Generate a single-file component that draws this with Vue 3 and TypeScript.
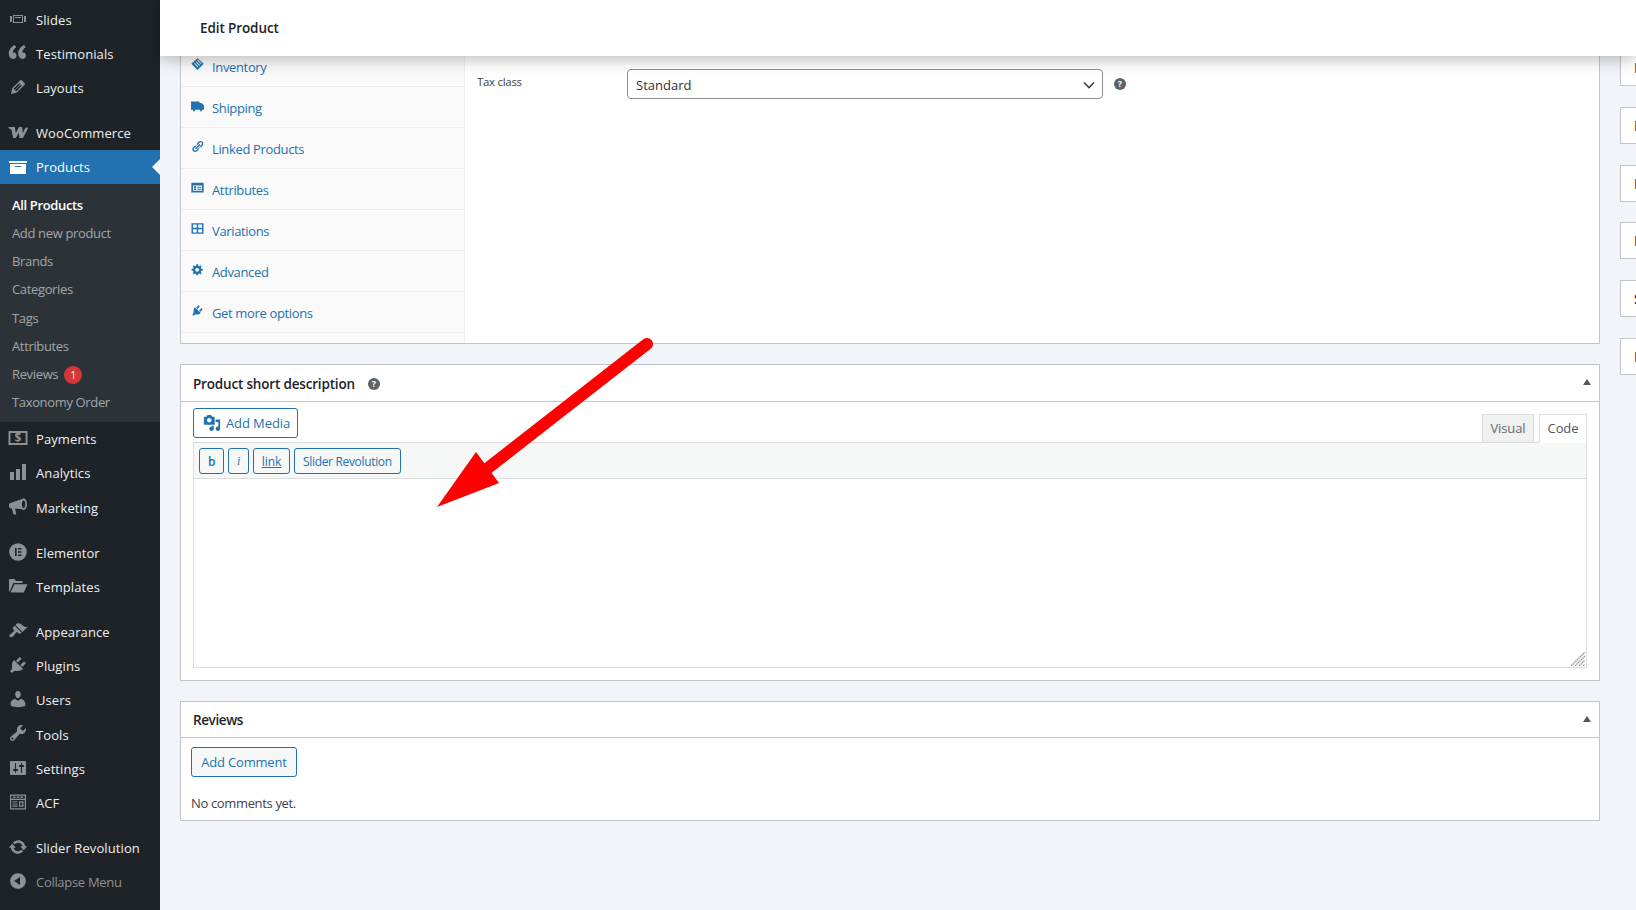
<script setup lang="ts">
interface MenuItem { label: string; d: string; gap?: boolean; glyph?: string }

const slides = 'M5 14V6h10v8H5zm-3-1V7h2v6H2zm4-6v6h8V7H6zm10 0h2v6h-2V7zm-3 2V8H7v1h6z'
const quote = 'M8.54 12.74c0-.87-.24-1.61-.72-2.22-.73-.92-2.14-1.03-2.96-.85-.34-1.93 1.3-4.39 3.42-5.45L6.65 1.94C3.45 3.46.31 6.96.85 11.37 1.19 14.16 2.8 16 5.08 16c1 0 1.83-.29 2.48-.88.66-.59.98-1.38.98-2.38zm9.43 0c0-.87-.24-1.61-.72-2.22-.73-.92-2.14-1.03-2.96-.85-.34-1.93 1.3-4.39 3.42-5.45l-1.63-2.28c-3.2 1.52-6.34 5.02-5.8 9.43.34 2.79 1.95 4.63 4.23 4.63 1 0 1.83-.29 2.48-.88.66-.59.98-1.38.98-2.38z'
const edit = 'M13.89 3.39l2.71 2.72c.46.46.42 1.24.03 1.64l-8.01 8.02-5.56 1.16 1.16-5.58s7.6-7.63 7.99-8.03c.39-.39 1.22-.39 1.68.07zm-2.73 2.79l-5.59 5.61 1.11 1.11 5.54-5.65zm-2.97 8.23l5.58-5.6-1.07-1.08-5.59 5.6z'
const woo = 'M.2 5h6.6l1 6L11 5h3l1 6 2-4.4c.5-1.2 2.8-1.8 2.8-.3 0 1.2-3.5 7.2-4.8 9.7h-3.4l-.9-5-3 5H5.2L3.5 8 1.3 6.6z'
const archive = 'M19 4v2H1V4h18zM2 7h16v10H2V7zm11 3V9H7v1h6z'
const payments = 'M.5 3h19v14H.5zM2.4 5v10h15.2V5z'
const bars = 'M18 18V2h-4v16h4zm-6 0V7H8v11h4zm-6 0v-8H2v8h4z'
const megaphone = 'M15.6 1.5c2 0 3.4 2.6 3.4 5.7s-1.4 5.7-3.4 5.7c-.5 0-1-.2-1.4-.6L7 11.4l1.3 6.1H5.5l-1.6-6.1H3.2C2 11.4 1 10.5 1 9.3V8c0-1.2.9-2.1 2.1-2.2l11-3.7c.4-.4 1-.6 1.5-.6zM15.6 3.5c-1 0-1.7 1.7-1.7 3.7s.7 3.7 1.7 3.7 1.7-1.7 1.7-3.7-.7-3.7-1.7-3.7z'
const elementor = 'M10 1.2a8.8 8.8 0 1 0 0 17.6a8.8 8.8 0 0 0 0-17.6zM7 6h1.6v8H7zM10 6h3.5v1.6H10zM10 9.2h3.5v1.6H10zM10 12.4h3.5V14H10z'
const folder = 'M1 3h5.5L8 5h6.5v2H5.5L1.5 15.5H1zM6.4 8.2H19.5L15.8 16.5H2.5z'
const brush = 'M14.48 11.06L7.41 3.99l1.5-1.5c.5-.56 2.3-.47 3.51.32 1.21.8 1.43 1.28 2.91 2.1 1.18.64 2.45 1.26 4.45.85zm-.71.71L6.7 4.7 4.93 6.47c-.39.39-.39 1.02 0 1.41l1.06 1.06c.39.39.39 1.03 0 1.42-.6.6-1.43 1.11-2.21 1.69-.35.26-.7.53-1.01.84C1.43 13.23.91 14.8 1.8 15.7c.9.89 2.47.37 3.83-.98.32-.32.59-.66.85-1.01.58-.78 1.09-1.61 1.69-2.21.39-.39 1.03-.39 1.42 0l1.06 1.06c.39.39 1.02.39 1.41 0z'
const plug = 'M13.11 4.36L9.87 7.6 8 5.73l3.24-3.24c.35-.34 1.05-.2 1.56.32.52.51.66 1.21.31 1.55zm-8 1.77l.91-1.12 9.01 9.01-1.19.84c-.71.71-2.63 1.16-3.82 1.16H6.14L4.9 17.26c-.59.59-1.54.59-2.12 0-.59-.58-.59-1.53 0-2.12l1.24-1.24v-3.88c0-1.13.4-3.19 1.09-3.89zm7.26 3.97l3.24-3.24c.34-.35 1.04-.21 1.55.31.52.51.66 1.21.31 1.55l-3.24 3.25z'
const user = 'M10 9.25c-2.27 0-2.73-3.44-2.73-3.44C7 4.02 7.82 2 9.97 2c2.16 0 2.98 2.02 2.71 3.81 0 0-.41 3.44-2.68 3.44zm0 2.57L12.72 10c2.39 0 4.52 2.33 4.52 4.53v2.49s-3.65 1.13-7.24 1.13c-3.65 0-7.24-1.13-7.24-1.13v-2.49c0-2.25 1.94-4.48 4.47-4.48z'
const wrench = 'M16.68 9.77c-1.34 1.34-3.3 1.67-4.95.99l-5.41 6.52c-.99.99-2.59.99-3.58 0s-.99-2.59 0-3.57l6.52-5.42c-.68-1.65-.35-3.61.99-4.95 1.28-1.28 3.12-1.62 4.72-1.06l-2.89 2.89 2.82 2.82 2.86-2.87c.53 1.58.18 3.39-1.08 4.65zM3.81 16.21c.4.39 1.04.39 1.43 0 .4-.4.4-1.04 0-1.43-.39-.4-1.03-.4-1.43 0-.39.39-.39 1.03 0 1.43z'
const sliders = 'M18 16V4c0-.55-.45-1-1-1H3c-.55 0-1 .45-1 1v12c0 .55.45 1 1 1h14c.55 0 1-.45 1-1zM8 11h1c.55 0 1 .45 1 1s-.45 1-1 1H8v1.5c0 .28-.22.5-.5.5s-.5-.22-.5-.5V13H6c-.55 0-1-.45-1-1s.45-1 1-1h1V5.5c0-.28.22-.5.5-.5s.5.22.5.5V11zm5-2h-1c-.55 0-1-.45-1-1s.45-1 1-1h1V5.5c0-.28.22-.5.5-.5s.5.22.5.5V7h1c.55 0 1 .45 1 1s-.45 1-1 1h-1v5.5c0 .28-.22.5-.5.5s-.5-.22-.5-.5V9z'
const acf = 'M2 2.5h16v15H2zM3.2 3.7v3h13.6v-3zM5 4.5h2.5V6H5zM8.8 4.5h2.5V6H8.8zM12.5 4.5H15V6h-2.5zM3.2 7.9v8.4h13.6V7.9zM4.5 9.2h5v1.1h-5zM4.5 11.4h5v1.1h-5zM4.5 13.6h5v1.1h-5zM11 9.2h4.5v5.5H11zM12.2 10.4v3.1h2.1v-3.1z'
const update = 'M10.2 3.28c3.53 0 6.43 2.61 6.92 6h2.08l-3.5 4-3.5-4h2.32c-.45-1.97-2.21-3.45-4.32-3.45-1.45 0-2.73.71-3.54 1.78L4.95 5.66C6.23 4.2 8.11 3.28 10.2 3.28zm-.4 13.44c-3.52 0-6.43-2.61-6.92-6H.8l3.5-4c1.17 1.33 2.33 2.67 3.5 4H5.48c.45 1.97 2.21 3.45 4.32 3.45 1.45 0 2.73-.71 3.54-1.78l1.71 1.95c-1.28 1.46-3.15 2.38-5.25 2.38z'
const collapse = 'M10 2.16c4.33 0 7.84 3.51 7.84 7.84s-3.51 7.84-7.84 7.84S2.16 14.33 2.16 10 5.71 2.16 10 2.16zm2 11.72V6.12L6.18 9.97z'
const media = 'M13 11V4c0-.55-.45-1-1-1h-1.67L9 1H5L3.67 3H2c-.55 0-1 .45-1 1v7c0 .55.45 1 1 1h10c.55 0 1-.45 1-1zM7 4.5c1.38 0 2.5 1.12 2.5 2.5S8.38 9.5 7 9.5 4.5 8.38 4.5 7 5.62 4.5 7 4.5zM14 6h5v10.5c0 1.38-1.12 2.5-2.5 2.5S14 17.88 14 16.5s1.12-2.5 2.5-2.5c.17 0 .34.02.5.05V9h-3V6zm-4 8.05V13h2v3.5c0 1.38-1.12 2.5-2.5 2.5S7 17.88 7 16.5 8.12 14 9.5 14c.17 0 .34.02.5.05z'

const tagIcon = 'M10 .5L19.5 9 10 18.5.5 9zM10.6 2.8l-1 1L15.2 9.4l1-1zM8.2 5.2l-1 1L12.8 11.8l1-1zM5.8 7.6l-1 1L10.4 14.2l1-1z'
const truck = 'M0 4h13v2h3.5L20 10v6.5H0zM3 16.5h3V19H3zM14 16.5h3V19h-3z'
const link = 'M17.74 2.76c1.68 1.69 1.68 4.41 0 6.1l-1.53 1.52c-1.12 1.12-2.7 1.47-4.14 1.09l2.62-2.61.76-.77.76-.76c.84-.84.84-2.2 0-3.04-.84-.85-2.2-.85-3.04 0l-.77.76-3.38 3.38c-.37-1.44-.02-3.02 1.1-4.14l1.52-1.53c1.69-1.68 4.42-1.68 6.1 0zM8.59 13.43l5.34-5.34c.42-.42.42-1.1 0-1.52-.44-.43-1.13-.39-1.53 0l-5.33 5.34c-.42.42-.42 1.1 0 1.52.44.43 1.13.39 1.52 0zm-.76 2.29l4.14-4.15c.38 1.44.03 3.02-1.09 4.14l-1.52 1.53c-1.69 1.68-4.41 1.68-6.1 0-1.68-1.68-1.68-4.42 0-6.1l1.53-1.52c1.12-1.12 2.7-1.47 4.14-1.1l-4.14 4.15c-.85.84-.85 2.2 0 3.05.84.84 2.2.84 3.04 0z'
const card = 'M.5 2.5h19v15H.5zM3 7v8h14V7zM4.5 8.2h3.2v2.4H4.5zM4.5 11.6h3.2v2.2H4.5zM9.5 8.8h6.3v1.4H9.5zM9.5 12h6.3v1.4H9.5z'
const grid = 'M.8 2h18.4v16H.8zM3 4v4.9h5.9V4zM11.1 4v4.9H17V4zM3 11.1V16h5.9v-4.9zM11.1 11.1V16H17v-4.9z'
const gear = 'M18 12h-2.18c-.17.7-.44 1.35-.81 1.93l1.54 1.54-2.1 2.1-1.54-1.54c-.58.36-1.23.63-1.91.79V19H8v-2.18c-.68-.16-1.33-.43-1.91-.79l-1.54 1.54-2.12-2.12 1.54-1.54c-.36-.58-.63-1.23-.79-1.91H1V9.03h2.17c.16-.7.44-1.35.8-1.94L2.43 5.55l2.1-2.1 1.54 1.54c.58-.37 1.24-.64 1.93-.81V2h3v2.18c.68.16 1.33.43 1.91.79l1.54-1.54 2.12 2.12-1.54 1.54c.36.59.64 1.24.8 1.94H18V12zm-8.5 1.5c1.66 0 3-1.34 3-3s-1.34-3-3-3-3 1.34-3 3 1.34 3 3 3z'

const topMenu: MenuItem[] = [
  { label: 'Slides', d: slides },
  { label: 'Testimonials', d: quote },
  { label: 'Layouts', d: edit },
  { label: 'WooCommerce', d: woo, gap: true },
]
const subMenu = ['Add new product', 'Brands', 'Categories', 'Tags', 'Attributes']
const bottomMenu: MenuItem[] = [
  { label: 'Payments', d: payments, glyph: '$' },
  { label: 'Analytics', d: bars },
  { label: 'Marketing', d: megaphone },
  { label: 'Elementor', d: elementor, gap: true },
  { label: 'Templates', d: folder },
  { label: 'Appearance', d: brush, gap: true },
  { label: 'Plugins', d: plug },
  { label: 'Users', d: user },
  { label: 'Tools', d: wrench },
  { label: 'Settings', d: sliders },
  { label: 'ACF', d: acf },
  { label: 'Slider Revolution', d: update, gap: true },
]
const tabs = [
  { label: 'Inventory', d: tagIcon },
  { label: 'Shipping', d: truck },
  { label: 'Linked Products', d: link },
  { label: 'Attributes', d: card },
  { label: 'Variations', d: grid },
  { label: 'Advanced', d: gear },
  { label: 'Get more options', d: plug },
]
const sideBoxes = ['P', 'P', 'P', 'P', 'S', 'P']
</script>

<template>
  <div class="page">
    <aside class="sidebar">
      <ul class="menu top">
        <li v-for="m in topMenu" :key="m.label" class="item" :class="{ gap: m.gap }">
          <svg class="ico" viewBox="0 0 20 20"><path :d="m.d" fill-rule="evenodd" /></svg>
          <span>{{ m.label }}</span>
        </li>
        <li class="item current">
          <svg class="ico" viewBox="0 0 20 20"><path :d="archive" fill-rule="evenodd" /></svg>
          <span>Products</span>
          <i class="notch"></i>
        </li>
      </ul>
      <ul class="sub">
        <li class="strong">All Products</li>
        <li v-for="s in subMenu" :key="s">{{ s }}</li>
        <li>Reviews <b class="badge">1</b></li>
        <li>Taxonomy Order</li>
      </ul>
      <ul class="menu">
        <li v-for="m in bottomMenu" :key="m.label" class="item" :class="{ gap: m.gap }">
          <svg class="ico" viewBox="0 0 20 20">
            <path :d="m.d" fill-rule="evenodd" />
            <text v-if="m.glyph" x="10" y="14" text-anchor="middle" class="glyph">{{ m.glyph }}</text>
          </svg>
          <span>{{ m.label }}</span>
        </li>
        <li class="item dim">
          <svg class="ico" viewBox="0 0 20 20"><path :d="collapse" fill-rule="evenodd" /></svg>
          <span>Collapse Menu</span>
        </li>
      </ul>
    </aside>

    <main class="main">
      <header class="topbar">Edit Product</header>

      <div class="columns">
        <div class="left">
          <section class="panel data">
            <ul class="tabs">
              <li v-for="t in tabs" :key="t.label">
                <svg viewBox="0 0 20 20"><path :d="t.d" fill-rule="evenodd" /></svg>
                <span>{{ t.label }}</span>
              </li>
            </ul>
            <div class="tax">
              <label>Tax class</label>
              <div class="select">
                <span>Standard</span>
                <svg viewBox="0 0 12 8"><path d="M1 1.5l5 5 5-5" fill="none" stroke="#3c434a" stroke-width="1.6" /></svg>
              </div>
              <i class="help">?</i>
            </div>
          </section>

          <section class="panel">
            <h2 class="phead">
              <span>Product short description</span><i class="help">?</i>
              <i class="toggle"></i>
            </h2>
            <div class="pbody">
              <div class="toprow">
                <button class="btn media">
                  <svg viewBox="0 0 20 20"><path :d="media" fill-rule="evenodd" /></svg>Add Media
                </button>
                <div class="modes">
                  <span class="mode visual">Visual</span>
                  <span class="mode on">Code</span>
                </div>
              </div>
              <div class="qt">
                <button class="qb b">b</button>
                <button class="qb i">i</button>
                <button class="qb l">link</button>
                <button class="qb">Slider Revolution</button>
              </div>
              <div class="editor">
                <svg class="grip" viewBox="0 0 14 14">
                  <path d="M0 14L14 0M4 14L14 4M8 14l6-6M12 14l2-2" stroke="#8c8f94" stroke-width="1.3" stroke-dasharray="1.5 .6" fill="none" />
                </svg>
              </div>
            </div>
          </section>

          <section class="panel">
            <h2 class="phead small"><span>Reviews</span><i class="toggle"></i></h2>
            <div class="rbody">
              <button class="btn comment">Add Comment</button>
              <p>No comments yet.</p>
            </div>
          </section>
        </div>

        <div class="right">
          <div v-for="(b, i) in sideBoxes" :key="i" class="box">{{ b }}</div>
        </div>
      </div>

      <svg class="arrow" viewBox="0 0 700 560" width="700" height="560" aria-hidden="true">
        <line x1="647" y1="344" x2="488" y2="468" stroke="#ff0000" stroke-width="12" stroke-linecap="round" />
        <polygon points="437,507 476,452 499,483" fill="#ff0000" />
      </svg>
    </main>
  </div>
</template>

<style>
html, body { margin: 0; background: #f1f4f8; overflow: hidden; }
</style>

<style scoped>
.page {
  display: flex;
  width: 1636px;
  height: 910px;
  overflow: hidden;
  font-family: "Open Sans", "Noto Sans", sans-serif;
  font-size: 13px;
  background: #f1f4f8;
  color: #3c434a;
}
ul { list-style: none; margin: 0; padding: 0; }

.sidebar { width: 160px; flex: none; background: #1d2327; color: #f0f0f1; }
.menu.top { padding-top: 2.5px; }
.item {
  position: relative;
  display: flex;
  align-items: center;
  height: 34.2px;
  padding-left: 36px;
  white-space: nowrap;
  letter-spacing: 0.1px;
}
.item.gap { margin-top: 10.9px; }
.ico {
  position: absolute;
  left: 8px;
  top: 6px;
  width: 20px;
  height: 20px;
  fill: #8e9194;
}
.glyph { font: 700 12px "Open Sans", sans-serif; fill: #8e9194; }
.item.current { background: #2271b1; color: #fff; height: 34px; letter-spacing: 0; }
.item.current .ico { fill: #fff; top: 7px; }
.notch {
  position: absolute;
  right: 0;
  top: 9px;
  border: 8px solid transparent;
  border-left-width: 0;
  border-right-color: #f1f4f8;
}
.item.dim { color: #8e9194; letter-spacing: -0.3px; }

.sub { background: #2c3338; padding: 7px 0 6.3px; color: #a2a6aa; }
.sub li { height: 28.1px; line-height: 28px; padding-left: 12px; white-space: nowrap; letter-spacing: -0.35px; }
.sub .strong { color: #fff; font-weight: 600; }
.badge {
  display: inline-block;
  width: 18px;
  height: 18px;
  line-height: 18px;
  margin-left: 3px;
  border-radius: 50%;
  background: #d63638;
  color: #fff;
  font-size: 10px;
  font-weight: 400;
  text-align: center;
  letter-spacing: 0;
}

.main { position: relative; flex: 1; min-width: 0; padding-left: 20px; }
.topbar {
  position: absolute;
  top: 0;
  left: 0;
  right: 0;
  z-index: 2;
  height: 56px;
  box-sizing: border-box;
  padding: 18px 0 0 40px;
  background: #fff;
  box-shadow: 0 2px 18px rgba(0, 0, 0, 0.3);
  color: #1d2327;
  font-size: 13.5px;
  font-weight: 600;
  line-height: 20px;
  letter-spacing: -0.1px;
}
.columns { display: flex; gap: 20px; }
.left { width: 1420px; flex: none; padding-top: 45px; }
.right { padding-top: 49px; width: 280px; flex: none; }
.box {
  box-sizing: border-box;
  display: flex;
  align-items: center;
  height: 37px;
  margin-bottom: 20.8px;
  padding-left: 13px;
  background: #fff;
  border: 1px solid #c3c4c7;
  font-weight: 600;
  color: #1d2327;
  font-size: 14px;
}

.panel { background: #fff; border: 1px solid #c3c4c7; margin-bottom: 20px; box-sizing: border-box; }
.panel.data { display: flex; height: 299px; }
.tabs { width: 283px; flex: none; background: #fafafa; border-right: 1px solid #eee; }
.tabs li {
  position: relative;
  box-sizing: border-box;
  height: 41px;
  padding-left: 31px;
  border-bottom: 1px solid #eee;
  color: #2271b1;
  line-height: 42px;
  letter-spacing: -0.35px;
}
.tabs svg { position: absolute; left: 10px; top: 12px; width: 13px; height: 13px; fill: #2271b1; }
.tax { position: relative; flex: 1; display: flex; align-items: flex-start; padding: 23px 0 0 12px; }
.tax label { width: 150px; flex: none; font-size: 11.5px; line-height: 26px; letter-spacing: -0.3px; }
.select {
  box-sizing: border-box;
  width: 476px;
  height: 30px;
  display: flex;
  align-items: center;
  justify-content: space-between;
  padding: 1px 8px 0;
  border: 1px solid #8c8f94;
  border-radius: 4px;
  background: #fff;
  color: #2c3338;
}
.select svg { width: 12px; height: 8px; margin-right: -1px; }
.help {
  display: inline-block;
  flex: none;
  width: 12px;
  height: 12px;
  border-radius: 50%;
  background: #5f6367;
  color: #fff;
  font: 700 9px/12px "Open Sans", sans-serif;
  text-align: center;
}
.tax .help { margin: 8.5px 0 0 11px; }

.phead {
  position: relative;
  display: flex;
  align-items: center;
  height: 36px;
  margin: 0;
  padding: 1px 0 0 12px;
  box-sizing: content-box;
  border-bottom: 1px solid #c3c4c7;
  color: #1d2327;
  font-size: 13.5px;
  font-weight: 600;
  letter-spacing: -0.18px;
  height: 35px;
}
.phead.small { height: 34px; letter-spacing: -0.4px; }
.phead .help { margin-left: 13px; }
.toggle {
  position: absolute;
  right: 8px;
  top: 14px;
  border: 4px solid transparent;
  border-top-width: 0;
  border-bottom: 6px solid #50575e;
}
.pbody { padding: 6px 12px 12px; }
.toprow { display: flex; justify-content: space-between; height: 34px; }
.btn {
  box-sizing: border-box;
  height: 30px;
  border: 1px solid #2271b1;
  border-radius: 3px;
  background: #f6f7f7;
  color: #2271b1;
  font: inherit;
  letter-spacing: -0.2px;
  cursor: pointer;
}
.media { display: flex; align-items: center; width: 105px; padding: 0 0 0 9px; background: #fff; letter-spacing: -0.1px; }
.media svg { width: 18px; height: 18px; margin-right: 5px; fill: #2271b1; }
.modes { display: flex; align-items: flex-end; gap: 5px; margin-bottom: -1px; position: relative; z-index: 1; }
.mode {
  box-sizing: border-box;
  width: 48px;
  height: 29px;
  line-height: 26px;
  text-align: center;
  background: #f0f0f1;
  border: 1px solid #dcdcde;
  color: #646970;
  letter-spacing: -0.1px;
}
.mode.visual { width: 52px; }
.mode.on { background: #fff; color: #50575e; border-bottom-color: #fff; }
.qt {
  display: flex;
  gap: 4px;
  height: 37px;
  box-sizing: border-box;
  padding: 5px 0 0 5px;
  background: #f6f7f7;
  border: 1px solid #dcdcde;
}
.qb {
  box-sizing: border-box;
  height: 26px;
  padding: 0 8px;
  border: 1px solid #2271b1;
  border-radius: 3px;
  background: #f6f7f7;
  color: #2271b1;
  font: 12px "Open Sans", sans-serif;
  letter-spacing: -0.33px;
}
.qb.b { width: 25px; padding: 0; font-weight: 600; }
.qb.i { width: 21px; padding: 0; font-style: italic; font-family: "Liberation Serif", serif; }
.qb.l { width: 37px; padding: 0; text-decoration: underline; letter-spacing: 0; }
.editor {
  position: relative;
  height: 189px;
  box-sizing: border-box;
  border: 1px solid #dcdcde;
  border-top: 0;
}
.grip { position: absolute; right: 1px; bottom: 1px; width: 14px; height: 14px; }
.rbody { padding: 9px 10px 0; height: 82px; box-sizing: border-box; }
.comment { width: 106px; padding: 0; }
.rbody p { margin: 16px 0 0; line-height: 20px; letter-spacing: -0.35px; }

.arrow { position: absolute; top: 0; left: -160px; z-index: 1; pointer-events: none; }
</style>
